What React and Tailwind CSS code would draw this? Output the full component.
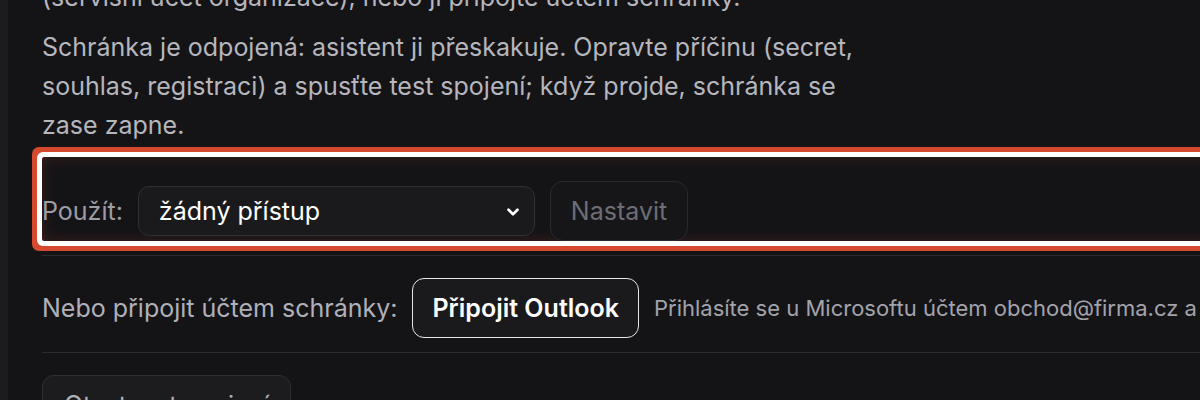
import { ChevronDown } from 'lucide-react'

export default function App() {
  return (
    <div className="w-[1200px] h-[400px] overflow-hidden bg-[#141417] flex" style={{ fontFamily: 'Inter, "Noto Sans", sans-serif' }}>
      <div className="w-[8px] shrink-0 bg-[#1c1c1f]" />
      <div className="shrink-0 w-[1300px] pl-[34px] -mt-[22px] text-[25px] leading-[39px] text-[#b6b6bd]">
        <p className="whitespace-nowrap">(servisní účet organizace), nebo ji připojte účtem schránky.</p>
        <p className="mt-[11px] max-w-[825px]">
          Schránka je odpojená: asistent ji přeskakuje. Opravte příčinu (secret, souhlas, registraci) a spusťte test spojení; když projde, schránka se zase zapne.
        </p>

        <div className="mt-[12px] pt-[24px] rounded-[2px] flex items-center gap-[15px] shadow-[0_0_0_5px_#ffffff,0_0_0_10px_#d54a2e,inset_0_0_14px_rgba(213,74,46,0.22)]">
          <span className="text-[#9d9da5]">Použít:</span>
          <div className="relative w-[397px] h-[50px] rounded-[11px] border border-[#2f2f34] bg-[#1a1a1d] flex items-center pl-[20px] text-white">
            žádný přístup
            <ChevronDown className="absolute right-[12px] top-[16px] w-[18px] h-[18px]" strokeWidth={3.5} />
          </div>
          <button className="h-[60px] px-[20px] rounded-[13px] border border-[#2a2a2e] bg-[#161619] text-[#6d6d75]">
            Nastavit
          </button>
        </div>

        <div className="mt-[14px] border-t border-[#2c2c30] pt-[22px] pb-[14px] flex items-center gap-[15px] whitespace-nowrap">
          <span className="text-[#b0b0b8]">Nebo připojit účtem schránky:</span>
          <button className="h-[60px] px-[19px] rounded-[12px] border-[1.5px] border-[#e6e6e6] bg-[#1a1a1d] text-white font-semibold">
            Připojit Outlook
          </button>
          <span className="text-[22px] text-[#a3a3ab]">Přihlásíte se u Microsoftu účtem obchod@firma.cz a potvrdíte přístup.</span>
        </div>

        <div className="border-t border-[#2c2c30] pt-[22px]">
          <button className="h-[60px] px-[21px] rounded-[12px] border border-[#2f2f34] bg-[#1c1c1f] text-[#b0b0b8]">
            Otestovat spojení
          </button>
        </div>
      </div>
    </div>
  )
}
